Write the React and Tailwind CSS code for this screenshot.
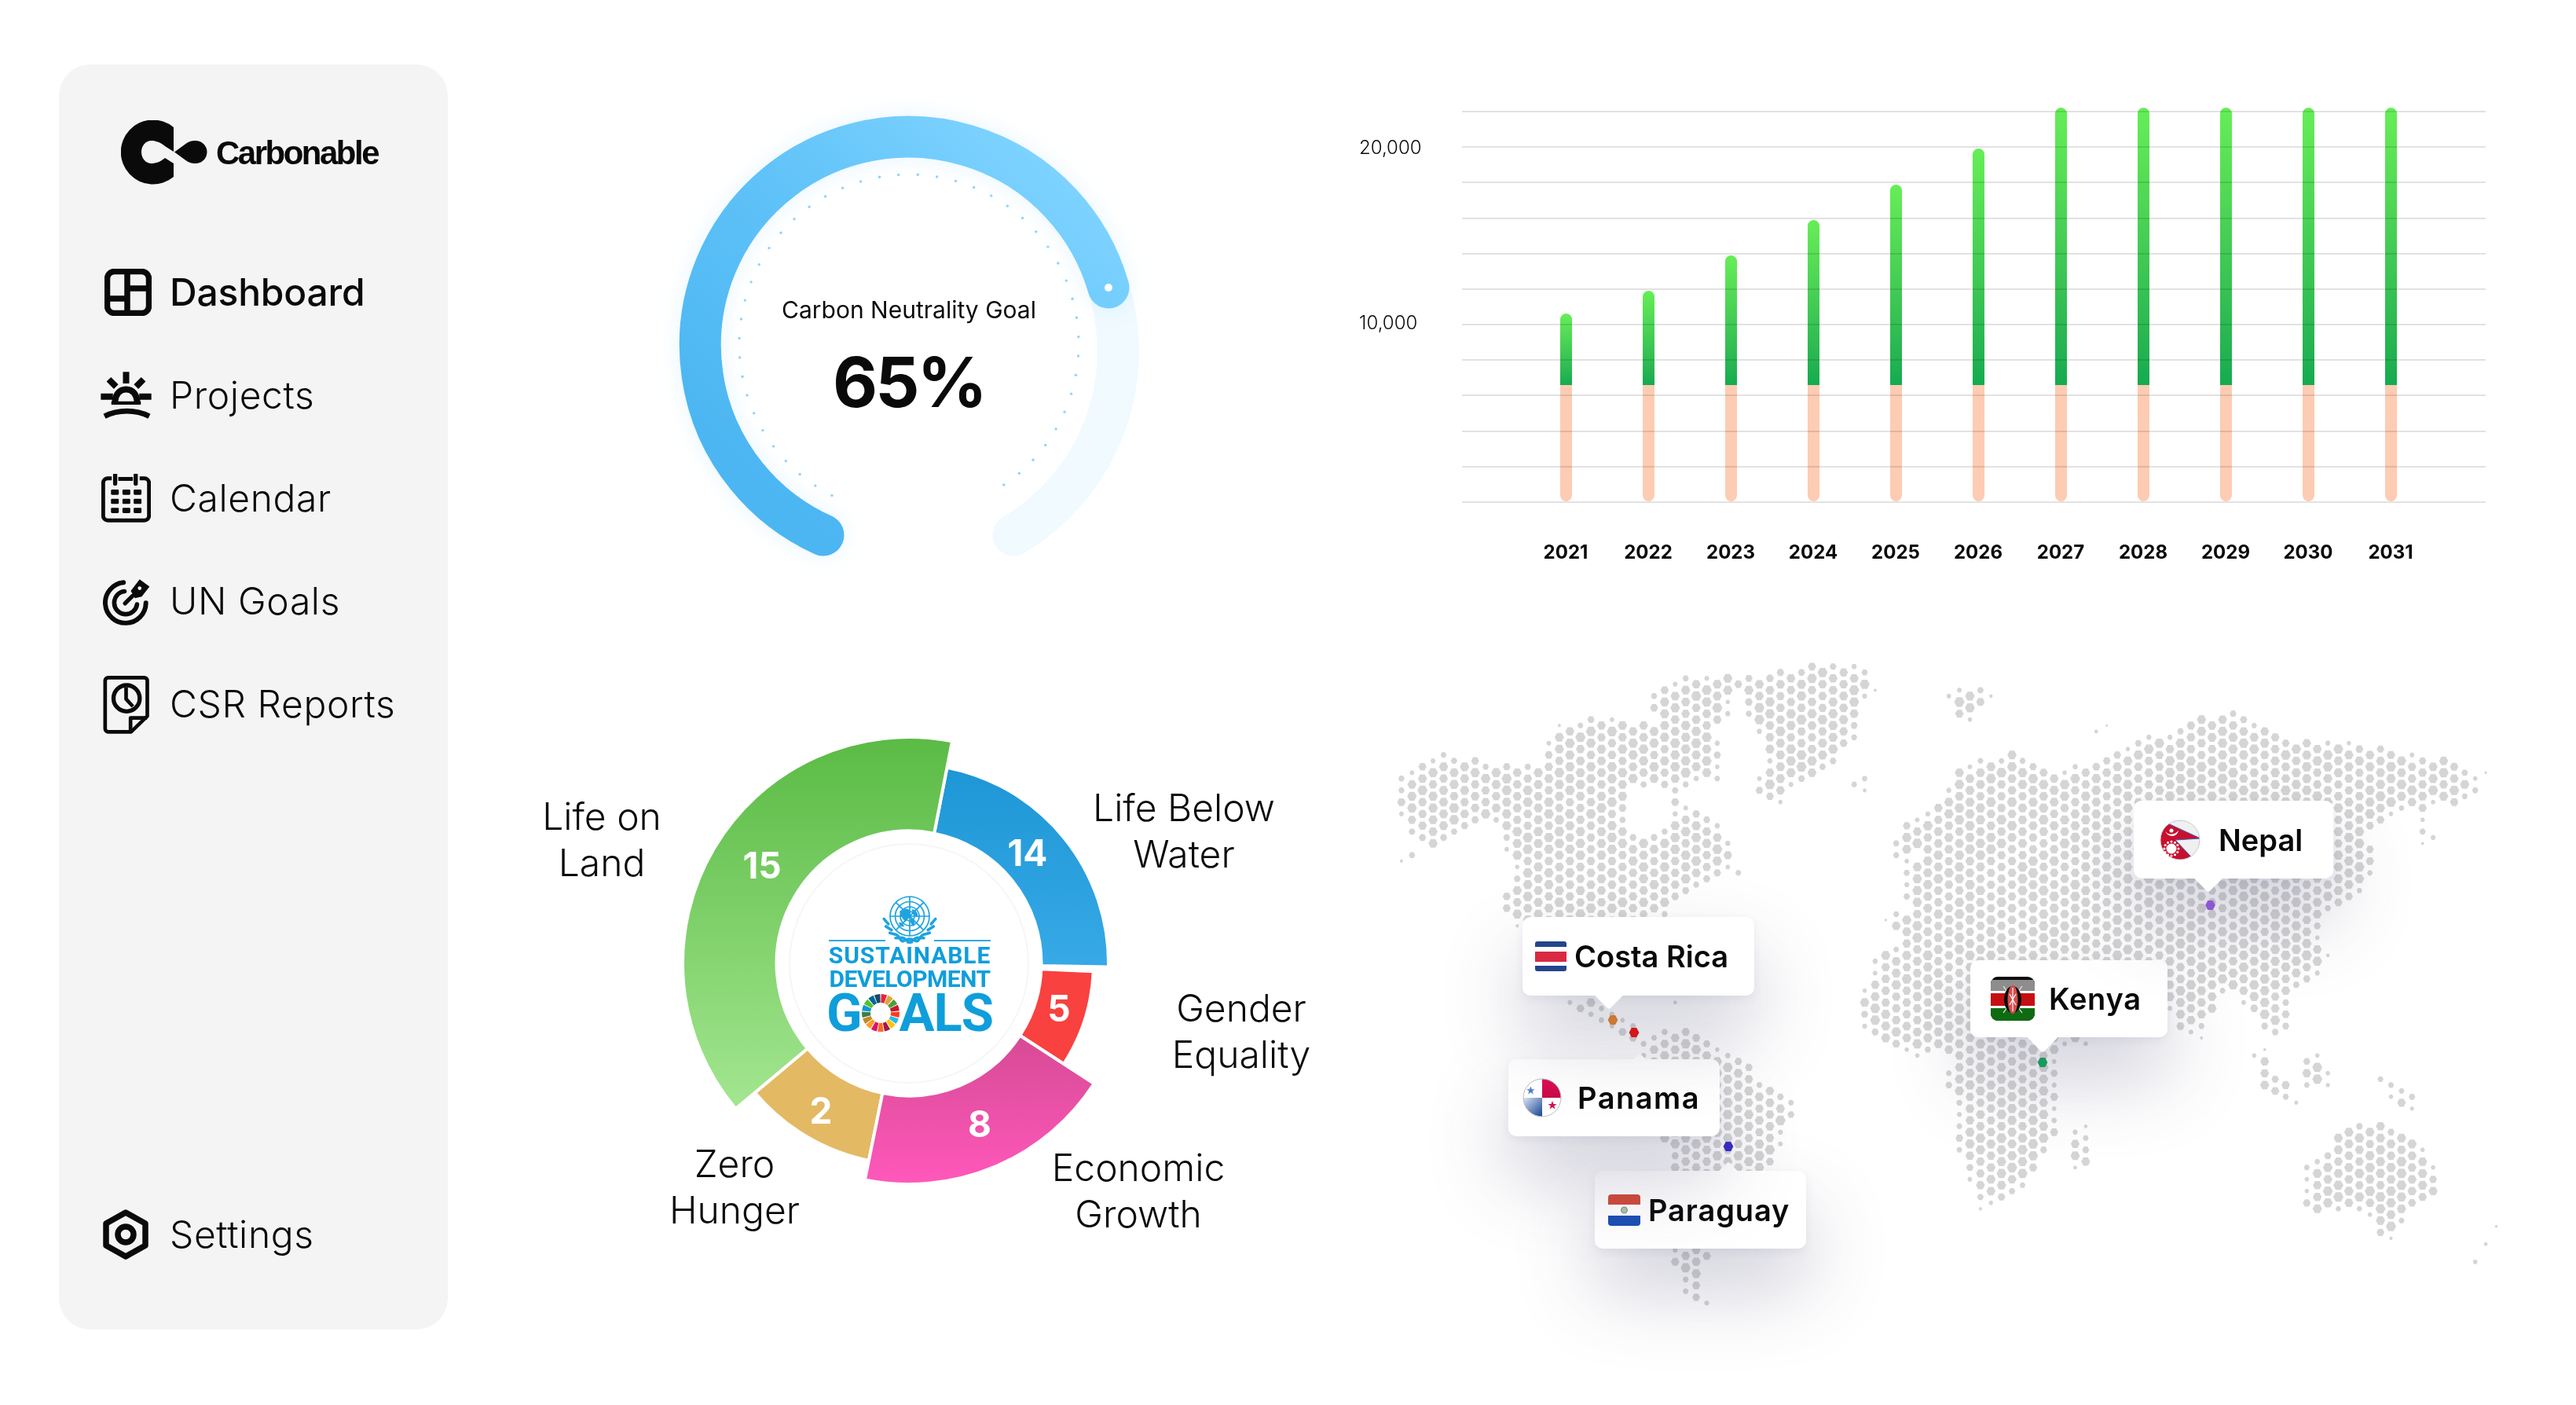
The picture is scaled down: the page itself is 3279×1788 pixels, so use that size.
import React from "react"

const navFont = { fontFamily: "Inter, sans-serif" }

const polar = (cx, cy, r, deg) => {
  const a = (deg * Math.PI) / 180
  return [cx + r * Math.sin(a), cy - r * Math.cos(a)]
}

const wedge = (cx, cy, r0, r1, a0, a1) => {
  const [x0, y0] = polar(cx, cy, r1, a0)
  const [x1, y1] = polar(cx, cy, r1, a1)
  const [x2, y2] = polar(cx, cy, r0, a1)
  const [x3, y3] = polar(cx, cy, r0, a0)
  const big = a1 - a0 > 180 ? 1 : 0
  return `M${x0} ${y0}A${r1} ${r1} 0 ${big} 1 ${x1} ${y1}L${x2} ${y2}A${r0} ${r0} 0 ${big} 0 ${x3} ${y3}Z`
}

/* ---------- sidebar icons, drawn in the pixel space of the crop ---------- */

const DashboardIcon = () => (
  <svg width="60" height="60" viewBox="0 0 60 60" fill="none" stroke="#0a0a0a" strokeWidth="7.500">
    <rect x="3.500" y="3.500" width="53" height="53" rx="9" />
    <path d="M29 4V56M4 38H29M29 25H56" />
  </svg>
)

const SunIcon = () => (
  <svg width="67" height="62" viewBox="50 30 200 185" fill="none" stroke="#0a0a0a" strokeWidth="24">
    <path d="M108 150C108 122 124 100 150 100S192 122 192 150" />
    <path d="M150 34V78M84 62L112 90M216 62L188 90M54 128H100M200 128H246" />
    <path d="M94 152H206" strokeWidth="12" />
    <path d="M68 202C120 176 186 176 238 202" strokeWidth="20" />
  </svg>
)

const CalendarIcon = () => (
  <svg width="63" height="62" viewBox="55 425 190 186" fill="none" stroke="#0a0a0a">
    <path d="M95 442H80A18 18 0 0 0 62 460V585A18 18 0 0 0 80 603H220A18 18 0 0 0 238 585V460A18 18 0 0 0 220 442H202" strokeWidth="15" />
    <path d="M120 444H176" strokeWidth="15" />
    <path d="M108 428V462M187 428V462" strokeWidth="16" strokeLinecap="round" />
    <g fill="#0a0a0a" stroke="none">
      <rect x="92" y="485" width="30" height="20" rx="4" />
      <rect x="136" y="485" width="30" height="20" rx="4" />
      <rect x="179" y="485" width="30" height="20" rx="4" />
      <rect x="92" y="520" width="30" height="20" rx="4" />
      <rect x="136" y="520" width="30" height="20" rx="4" />
      <rect x="179" y="520" width="30" height="20" rx="4" />
      <rect x="92" y="555" width="30" height="20" rx="4" />
      <rect x="136" y="555" width="30" height="20" rx="4" />
      <rect x="179" y="555" width="30" height="20" rx="4" />
    </g>
  </svg>
)

const TargetIcon = () => (
  <svg width="63" height="63" viewBox="60 825 190 190" fill="none" stroke="#0a0a0a" strokeLinecap="round">
    <path d="M142 850A78 78 0 1 0 228 928" strokeWidth="18" />
    <path d="M146 884A44 44 0 1 0 194 934" strokeWidth="17" />
    <path d="M148 930L176 902" strokeWidth="16" />
    <path d="M170 882L204 838L242 866L212 904L186 910Z" fill="#0a0a0a" stroke="none" />
    <circle cx="204" cy="872" r="7" fill="#f4f4f4" stroke="none" />
  </svg>
)

const ReportIcon = () => (
  <svg width="62" height="76" viewBox="55 1185 185 228" fill="none" stroke="#0a0a0a" strokeWidth="14" strokeLinejoin="round">
    <path d="M78 1198H215A12 12 0 0 1 227 1210V1345L165 1405H78A12 12 0 0 1 66 1393V1210A12 12 0 0 1 78 1198Z" />
    <path d="M163 1405V1352H226" />
    <circle cx="148" cy="1277" r="50" strokeWidth="16" />
    <path d="M146 1235V1280L172 1308" />
  </svg>
)

const SettingsIcon = () => (
  <svg width="60" height="64" viewBox="0 0 60 64" fill="none" stroke="#0a0a0a" strokeWidth="7.500" strokeLinejoin="round">
    <path d="M30 4L55 18V46L30 60L5 46V18Z" />
    <circle cx="30" cy="32" r="10" />
  </svg>
)

const LogoMark = () => (
  <svg width="110" height="82" viewBox="154 152 110 82">
    <path d="M221 161A41 41 0 1 0 221 224V207L210 200C204 205 198 207 193 207C185 207 180 200 180 192.500C180 185 185 178 193 178C198 178 204 180 210 185L221 192Z" fill="#0a0a0a" />
    <path d="M222 192.500L235 183C240 179 244 178 249 178A14.500 14.500 0 0 1 249 207C244 207 240 206 235 202Z" fill="#0a0a0a" />
  </svg>
)

const NavItem = ({ icon, label, active }) => (
  <div className="flex items-center h-[131px]">
    <div className="w-[91px] shrink-0 flex items-center">{icon}</div>
    <span className={active ? "text-[48px] font-medium text-[#0a0a0a] tracking-[-0.2px]" : "text-[48px] font-light text-[#0a0a0a] tracking-[0.6px]"}>
      {label}
    </span>
  </div>
)

const Sidebar = () => (
  <aside className="w-[495px] h-[1610px] my-[82px] bg-[#f4f4f4] rounded-[40px] flex flex-col pl-[50px] pb-[56px] shrink-0" style={navFont}>
    <div className="flex items-center pl-[29px] h-[224px] shrink-0 gap-[11px]">
      <LogoMark />
      <span className="text-[42px] font-bold tracking-[-2.5px] text-[#0a0a0a] font-['Liberation_Sans',sans-serif]">Carbonable</span>
    </div>
    <NavItem active label="Dashboard" icon={<div className="ml-[8px]"><DashboardIcon /></div>} />
    <NavItem label="Projects" icon={<div className="ml-[2px]"><SunIcon /></div>} />
    <NavItem label="Calendar" icon={<div className="ml-[4px]"><CalendarIcon /></div>} />
    <NavItem label="UN Goals" icon={<div className="ml-[5px]"><TargetIcon /></div>} />
    <NavItem label="CSR Reports" icon={<div className="ml-[5px]"><ReportIcon /></div>} />
    <div className="mt-auto">
      <NavItem label="Settings" icon={<div className="ml-[5px]"><SettingsIcon /></div>} />
    </div>
  </aside>
)

/* ---------- gauge ---------- */

const gaugeDots = []
for (let a = 207; a <= 510; a += 6.5) gaugeDots.push(polar(1157, 438, 216, a))

const Gauge = () => (
  <div className="pl-[267px] pt-[118px]">
    <div className="relative w-[640px] h-[640px]">
      <svg width="640" height="640" viewBox="837 118 640 640" fill="none">
        <defs>
          <linearGradient id="gaugeBlue" gradientUnits="userSpaceOnUse" x1="1000" y1="640" x2="1380" y2="220">
            <stop offset="0" stopColor="#4cb6f2" />
            <stop offset="0.5" stopColor="#5fc2f8" />
            <stop offset="1" stopColor="#80d4ff" />
          </linearGradient>
        </defs>
        <path d="M1411 366A272 272 0 0 1 1290 681" stroke="#f0faff" strokeWidth="53" strokeLinecap="round" />
        <g className="drop-shadow-[0_0_14px_rgba(77,182,242,0.14)]">
          <path d="M1048 681A265 265 0 1 1 1411 366" stroke="url(#gaugeBlue)" strokeWidth="53" strokeLinecap="round" />
        </g>
        <circle cx="1411" cy="366" r="5" fill="#fff" />
        {gaugeDots.map(([x, y], i) => (
          <circle key={i} cx={x} cy={y} r="1.700" fill="#8fd3f7" />
        ))}
      </svg>
      <div className="absolute inset-0 flex flex-col items-center" style={navFont}>
        <p className="mt-[256px] text-[30px] leading-[40px] text-[#0a0a0a]">Carbon Neutrality Goal</p>
        <p className="mt-[22px] text-[88px] leading-[100px] font-bold text-[#0a0a0a] tracking-[-3px]">65%</p>
      </div>
    </div>
  </div>
)

/* ---------- bar chart ---------- */

const bars = [
  { year: 2021, green: 91 },
  { year: 2022, green: 120 },
  { year: 2023, green: 165 },
  { year: 2024, green: 210 },
  { year: 2025, green: 255 },
  { year: 2026, green: 301 },
  { year: 2027, green: 353 },
  { year: 2028, green: 353 },
  { year: 2029, green: 353 },
  { year: 2030, green: 353 },
  { year: 2031, green: 353 },
]

const BarChart = () => (
  <div className="pt-[141px] pl-[30px] flex" style={navFont}>
    <div className="w-[131px] shrink-0 text-[24px] leading-[30px] font-light text-[#0a0a0a]">
      <p className="mt-[32px]">20,000</p>
      <p className="mt-[193px]">10,000</p>
    </div>
    <div className="w-[1303px]">
      <div className="relative h-[499px] flex flex-col justify-between">
        {Array.from({ length: 12 }).map((_, i) => (
          <div key={i} className="h-[2px] bg-[#e2e2e2]" />
        ))}
        <div className="absolute inset-0 flex items-end pl-[79.500px] pb-[2px]">
          {bars.map((b) => (
            <div key={b.year} className="w-[105px] flex flex-col items-center mix-blend-multiply">
              <div className="w-[15px] rounded-t-full bg-gradient-to-b from-[#66ee57] to-[#14ab50]" style={{ height: b.green }} />
              <div className="w-[15px] h-[148px] rounded-b-full bg-[#fdccb3]" />
            </div>
          ))}
        </div>
      </div>
      <div className="flex pl-[79.500px] mt-[48px]">
        {bars.map((b) => (
          <div key={b.year} className="w-[105px] text-center text-[24px] leading-[30px] font-bold text-[#0a0a0a]">{b.year}</div>
        ))}
      </div>
    </div>
  </div>
)

/* ---------- SDG donut ---------- */

const sdgColors = ["#e5243b", "#dda63a", "#4c9f38", "#c5192d", "#ff3a21", "#26bde2", "#fcc30b", "#a21942", "#fd6925", "#dd1367", "#fd9d24", "#bf8b2e", "#3f7e44", "#0a97d9", "#56c02b", "#00689d", "#19486a"]

const SdgWheel = () => (
  <svg width="50" height="50" viewBox="0 0 50 50">
    {sdgColors.map((c, i) => (
      <path key={i} d={wedge(25, 25, 13, 24, (i * 360) / 17 + 1.500, ((i + 1) * 360) / 17 - 1.500)} fill={c} />
    ))}
  </svg>
)

const UnEmblem = () => (
  <svg width="72" height="72" viewBox="-36 -36 72 72" fill="none" stroke="#1fa3e0">
    <g strokeWidth="1.700">
      <circle r="25" />
      <circle r="18.500" />
      <circle r="12" />
      <circle r="6" />
      <path d="M0 -25V25M-25 0H25M-17.700 -17.700L17.700 17.700M17.700 -17.700L-17.700 17.700" />
    </g>
    <path d="M-13 -6C-7 -12 2 -10 1 -3C-2 -3 -2 3 -5 7C-9 4 -12 -1 -13 -6ZM3 -9C8 -8 11 -4 10 1C6 1 3 -3 3 -9ZM1 3C5 3 8 8 5 13C2 11 0 7 1 3ZM-14 8C-11 7 -8 10 -7 13C-10 14 -13 12 -14 8Z" fill="#1fa3e0" stroke="none" />
    <g strokeWidth="3.600" strokeLinecap="round">
      {[...Array(7)].map((_, i) => {
        const a = 110 + i * 17
        const [x0, y0] = polar(0, 0, 29, a)
        const [x1, y1] = polar(0, 0, 33, a - 14)
        const [x2, y2] = polar(0, 0, 29, -a)
        const [x3, y3] = polar(0, 0, 33, -a + 14)
        return (
          <g key={i}>
            <path d={`M${x0} ${y0}L${x1} ${y1}`} />
            <path d={`M${x2} ${y2}L${x3} ${y3}`} />
          </g>
        )
      })}
    </g>
    <path d="M-4 33C-2 34 2 34 4 33" strokeWidth="2" />
  </svg>
)

const DonutNumber = ({ className, children }) => (
  <span className={`absolute -translate-x-1/2 -translate-y-1/2 text-[46px] leading-none font-bold text-white ${className}`}>{children}</span>
)

const DonutLabel = ({ className, children }) => (
  <p className={`absolute -translate-x-1/2 -translate-y-1/2 text-center text-[48px] leading-[59px] font-light text-[#0a0a0a] whitespace-pre ${className}`}>{children}</p>
)

const Donut = () => {
  const c = 320
  return (
    <div className="relative w-[1130px] h-[948px] pl-[267px] pt-[66px]" style={navFont}>
      <svg width="640" height="640" viewBox="0 0 640 640">
        <defs>
          <linearGradient id="dGreen" gradientUnits="userSpaceOnUse" x1="0" y1="35" x2="0" y2="505">
            <stop offset="0" stopColor="#5bbb45" />
            <stop offset="1" stopColor="#a3e690" />
          </linearGradient>
          <linearGradient id="dBlue" gradientUnits="userSpaceOnUse" x1="0" y1="70" x2="0" y2="320">
            <stop offset="0" stopColor="#1e96d5" />
            <stop offset="1" stopColor="#36a9e6" />
          </linearGradient>
          <linearGradient id="dPink" gradientUnits="userSpaceOnUse" x1="0" y1="420" x2="0" y2="600">
            <stop offset="0" stopColor="#d84b96" />
            <stop offset="1" stopColor="#ff58bb" />
          </linearGradient>
        </defs>
        <g stroke="#fff" strokeWidth="4">
          <path d={wedge(c, c, 168.500, 254, 11, 91)} fill="url(#dBlue)" />
          <path d={wedge(c, c, 168.500, 235, 92.500, 123)} fill="#f9413f" />
          <path d={wedge(c, c, 168.500, 256, 191.500, 230)} fill="#e3b964" />
          <path d={wedge(c, c, 168.500, 281, 123, 191.500)} fill="url(#dPink)" />
          <path d={wedge(c, c, 168.500, 288, 230, 371)} fill="url(#dGreen)" />
        </g>
        <circle cx={c} cy={c} r="152" fill="none" stroke="#f6f6f6" strokeWidth="2" />
      </svg>

      <DonutNumber className="left-[400px] top-[261px]">15</DonutNumber>
      <DonutNumber className="left-[738px] top-[245px]">14</DonutNumber>
      <DonutNumber className="left-[778px] top-[443px]">5</DonutNumber>
      <DonutNumber className="left-[677px] top-[590px]">8</DonutNumber>
      <DonutNumber className="left-[475px] top-[573px]">2</DonutNumber>

      <DonutLabel className="left-[196px] top-[228px]">{"Life on\nLand"}</DonutLabel>
      <DonutLabel className="left-[937px] top-[217px]">{"Life Below\nWater"}</DonutLabel>
      <DonutLabel className="left-[1010px] top-[472px]">{"Gender\nEquality"}</DonutLabel>
      <DonutLabel className="left-[879px] top-[675px]">{"Economic\nGrowth"}</DonutLabel>
      <DonutLabel className="left-[365px] top-[670px]">{"Zero\nHunger"}</DonutLabel>

      <div className="absolute left-[485px] top-[290px] w-[206px] flex flex-col items-center text-[#0f9edb] font-['Roboto',sans-serif] font-bold">
        <UnEmblem />
        <div className="w-full flex justify-between -mt-[6px]">
          <span className="w-[72px] h-[2px] bg-[#35a9e1]" />
          <span className="w-[72px] h-[2px] bg-[#35a9e1]" />
        </div>
        <p className="text-[30px] leading-[30px] mt-[3px] whitespace-nowrap tracking-[0.9px]">SUSTAINABLE</p>
        <p className="text-[30px] leading-[30px] whitespace-nowrap tracking-[-0.5px]">DEVELOPMENT</p>
        <div className="flex items-center text-[67px] leading-[56px] tracking-[-1px]">
          <span>G</span>
          <span className="-mx-[1px]"><SdgWheel /></span>
          <span>ALS</span>
        </div>
      </div>
    </div>
  )
}

/* ---------- world map ---------- */

const z5 = (pts) => pts.map(([x, y]) => [1760 + x / 1.96, 820 + y / 1.742])
const z6 = (pts) => pts.map(([x, y]) => [2360 + x / 1.823, 820 + y / 1.96])

const land = [
  // north america
  z5([[45,295],[100,245],[160,240],[290,262],[400,260],[410,215],[440,180],[520,160],[610,170],[660,170],[700,180],[800,190],[860,215],[850,295],[780,320],[740,345],[800,370],[850,400],[870,460],[900,515],[860,510],[800,530],[740,570],[690,610],[560,620],[330,640],[305,590],[315,480],[300,430],[270,400],[220,390],[170,440],[100,445],[45,400]]),
  z5([[670,100],[760,65],[885,65],[885,130],[860,180],[800,195],[700,185],[680,160]]),
  z5([[30,490],[80,460],[80,480],[40,500]]),
  // greenland
  z5([[870,80],[1040,50],[1210,45],[1240,95],[1180,140],[1185,210],[1130,265],[1040,300],[990,360],[935,345],[930,290],[970,240],[930,190],[900,130]]),
  z5([[1165,290],[1235,300],[1205,335],[1170,320]]),
  // central and south america
  z5([[440,785],[530,785],[610,820],[650,870],[620,880],[560,840],[480,805]]),
  z5([[695,785],[760,785],[760,800],[700,800]]),
  z5([[650,870],[760,845],[880,900],[950,960],[1035,1000],[1020,1060],[975,1150],[930,1220],[900,1290],[830,1340],[790,1400],[815,1465],[750,1445],[720,1350],[720,1150],[690,1090],[650,950]]),
  // eurasia and africa
  z6([[190,410],[260,290],[360,270],[440,310],[540,300],[630,250],[750,205],[850,170],[910,170],[1000,240],[1100,230],[1240,265],[1370,280],[1490,325],[1420,390],[1340,410],[1345,500],[1305,500],[1300,420],[1230,430],[1190,470],[1215,540],[1170,640],[1080,690],[1105,770],[1070,840],[1020,880],[1005,975],[950,960],[890,880],[860,855],[805,985],[770,985],[700,870],[640,850],[560,850],[540,1015],[490,1000],[465,1150],[470,1220],[400,1340],[350,1400],[290,1410],[260,1330],[235,1250],[240,1150],[215,1090],[230,1020],[130,1030],[60,1000],[15,940],[15,870],[40,800],[100,730],[60,700],[90,640],[120,620],[100,560],[90,500],[130,440]]),
  // islands
  z6([[215,110],[350,100],[310,150],[270,195],[230,170]]),
  z6([[530,260],[560,210],[615,180],[600,195],[550,240]]),
  z6([[1160,745],[1240,690],[1250,710],[1170,750]]),
  z6([[920,1000],[960,1000],[980,1080],[1060,1150],[1020,1150],[950,1100]]),
  z6([[1020,1075],[1070,1010],[1125,1070],[1090,1110],[1050,1110]]),
  z6([[1185,1050],[1240,1085],[1325,1130],[1290,1165],[1240,1125]]),
  z6([[1035,1320],[1090,1260],[1160,1200],[1220,1190],[1290,1210],[1345,1290],[1345,1390],[1280,1420],[1240,1495],[1200,1440],[1120,1410],[1050,1410]]),
  z6([[530,1190],[545,1190],[545,1290],[500,1320],[500,1230]]),
  z6([[1510,1430],[1490,1480],[1440,1545],[1425,1540],[1470,1470]]),
]

const holes = [
  z5([[620,310],[710,320],[720,400],[640,430],[610,390]]),
  z6([[70,640],[130,640],[130,660],[70,670]]),
  z6([[130,510],[160,520],[150,540],[120,540]]),
]

const inPoly = (poly, x, y) => {
  let hit = false
  for (let i = 0, j = poly.length - 1; i < poly.length; j = i++) {
    const [xi, yi] = poly[i]
    const [xj, yj] = poly[j]
    if (yi > y !== yj > y && x < ((xj - xi) * (y - yi)) / (yj - yi) + xi) hit = !hit
  }
  return hit
}

const isLand = (x, y) => land.some((p) => inPoly(p, x, y)) && !holes.some((p) => inPoly(p, x, y))

const hexPath = (x, y, s) => {
  const R = 6.400 * s
  const h = 5.900 * s
  return `M${(x - R).toFixed(1)} ${y.toFixed(1)}L${(x - R / 2).toFixed(1)} ${(y - h).toFixed(1)}L${(x + R / 2).toFixed(1)} ${(y - h).toFixed(1)}L${(x + R).toFixed(1)} ${y.toFixed(1)}L${(x + R / 2).toFixed(1)} ${(y + h).toFixed(1)}L${(x - R / 2).toFixed(1)} ${(y + h).toFixed(1)}Z`
}

const mapDots = () => {
  let d = ""
  const DX = 13.400
  const DY = 15
  for (let i = -60; i < 50; i++) {
    const x = 2547.700 + DX * i
    const off = Math.abs(i) % 2 === 1 ? DY / 2 : 0
    for (let j = -14; j < 45; j++) {
      const y = 1013.300 + DY * j + off
      if (!isLand(x, y)) continue
      const around = [[0, -DY], [0, DY], [DX, -DY / 2], [DX, DY / 2], [-DX, -DY / 2], [-DX, DY / 2]]
      const n = around.filter(([a, b]) => isLand(x + a, y + b)).length
      const rnd = Math.abs(Math.sin(i * 12.9898 + j * 78.233) * 43758.5453) % 1
      let s = 0.86 + rnd * 0.17
      if (n <= 4) s = 0.45 + rnd * 0.5
      if (n <= 2) s = 0.25 + rnd * 0.4
      d += hexPath(x, y, s)
    }
  }
  return d
}

const landPath = mapDots()

const CostaRicaFlag = () => (
  <svg width="40" height="38" viewBox="0 0 40 38" className="shrink-0">
    <clipPath id="crClip"><rect width="40" height="38" rx="3" /></clipPath>
    <g clipPath="url(#crClip)">
      <rect width="40" height="38" fill="#24458c" />
      <rect y="7" width="40" height="24" fill="#fff" />
      <rect y="13" width="40" height="13" fill="#d92a42" />
    </g>
  </svg>
)

const PanamaFlag = () => (
  <svg width="50" height="50" viewBox="0 0 50 50" className="shrink-0">
    <defs>
      <clipPath id="paClip"><circle cx="25" cy="25" r="24" /></clipPath>
      <linearGradient id="paBlue" x1="0" y1="0" x2="1" y2="1">
        <stop offset="0" stopColor="#dfe9f7" />
        <stop offset="1" stopColor="#123f8e" />
      </linearGradient>
      <linearGradient id="paRed" x1="0" y1="0" x2="0" y2="1">
        <stop offset="0" stopColor="#e20a57" />
        <stop offset="1" stopColor="#c70c47" />
      </linearGradient>
    </defs>
    <g clipPath="url(#paClip)">
      <rect width="50" height="50" fill="#fff" />
      <rect x="25" width="25" height="25" fill="url(#paRed)" />
      <rect y="25" width="25" height="25" fill="url(#paBlue)" />
    </g>
    <circle cx="25" cy="25" r="24" fill="none" stroke="#bdbdbd" />
    <path d="M11 12L12.500 16H16.500L13.200 18.500L14.500 22.500L11 20L7.500 22.500L8.800 18.500L5.500 16H9.500Z" transform="translate(0 -1) scale(.95)" fill="#4d82cc" />
    <path d="M39 29L40.500 33H44.500L41.200 35.500L42.500 39.500L39 37L35.500 39.500L36.800 35.500L33.500 33H37.500Z" transform="translate(-1 0)" fill="#d2104b" />
  </svg>
)

const ParaguayFlag = () => (
  <svg width="41" height="40" viewBox="0 0 41 40" className="shrink-0">
    <clipPath id="pyClip"><rect width="41" height="40" rx="4" /></clipPath>
    <g clipPath="url(#pyClip)">
      <rect width="41" height="40" fill="#fff" />
      <rect width="41" height="13" fill="#d24a3b" />
      <rect y="27" width="41" height="13" fill="#1c4fb4" />
    </g>
    <circle cx="20.500" cy="20" r="4" fill="#a9c8a8" stroke="#7b8f7a" />
  </svg>
)

const NepalFlag = () => (
  <svg width="52" height="52" viewBox="0 0 52 52" className="shrink-0">
    <defs>
      <clipPath id="npClip"><circle cx="26" cy="26" r="25" /></clipPath>
    </defs>
    <g clipPath="url(#npClip)">
      <rect width="52" height="52" fill="#f0f0f0" />
      <path d="M0 0L52 24L20 26L52 60H0Z" fill="#c8102e" stroke="#3a62b8" strokeWidth="1" />
    </g>
    <circle cx="26" cy="26" r="25" fill="none" stroke="#c9c9c9" />
    <path d="M7 15C11 20 19 20 24 14C22 23 11 23 7 15Z" fill="#fff" />
    <circle cx="15" cy="14" r="2.500" fill="#fff" />
    <g fill="#fff">
      <circle cx="15" cy="37" r="6.500" />
      {[...Array(12)].map((_, i) => {
        const [x, y] = polar(15, 37, 9, i * 30)
        return <circle key={i} cx={x} cy={y} r="1.500" />
      })}
    </g>
  </svg>
)

const KenyaFlag = () => (
  <svg width="56" height="56" viewBox="0 0 56 56" className="shrink-0">
    <clipPath id="keClip"><rect width="56" height="56" rx="9" /></clipPath>
    <g clipPath="url(#keClip)">
      <rect width="56" height="56" fill="#0b0b0b" />
      <rect y="4" width="56" height="14" fill="#8d8d8d" />
      <rect y="18" width="56" height="3" fill="#fff" />
      <rect y="21" width="56" height="16" fill="#c60f12" />
      <rect y="37" width="56" height="3" fill="#fff" />
      <rect y="40" width="56" height="16" fill="#0f6b12" />
    </g>
    <path d="M16 12L40 46M40 12L16 46" stroke="#efefef" strokeWidth="1.200" />
    <ellipse cx="28" cy="29" rx="11" ry="17" fill="#0b0b0b" />
    <ellipse cx="28" cy="29" rx="6.500" ry="18" fill="#d94b4b" />
    <path d="M28 14V44M24 22L32 36M32 22L24 36" stroke="#fff" strokeWidth="1.200" />
  </svg>
)

const tipShadow = "shadow-[0_4px_12px_rgba(70,70,110,0.08),0_50px_100px_rgba(70,70,110,0.27)]"

const Tooltip = ({ className, arrowClass, textClass, flag, name }) => (
  <div className={`absolute bg-white rounded-[10px] flex items-center ${tipShadow} ${className}`}>
    <span className={`absolute w-[28px] h-[28px] rotate-45 bg-white rounded-[3px] ${arrowClass}`} />
    <span className="relative flex items-center w-full h-full">
      {flag}
      <span className={`text-[38px] leading-none font-semibold text-[#0a0a0a] whitespace-nowrap font-['Inter',sans-serif] ${textClass}`}>{name}</span>
    </span>
  </div>
)

const WorldMap = () => (
  <div className="relative w-[1579px] h-[948px]">
    <svg width="1579" height="948" viewBox="1700 840 1579 948">
      <path d={landPath} fill="#d5d5d5" />
      <path d={hexPath(2053, 1298, 1)} fill="#e8832a" />
      <path d={hexPath(2080, 1314, 1)} fill="#ee1111" />
      <path d={hexPath(2200, 1459, 1)} fill="#3a2bc9" />
      <path d={hexPath(2813.500, 1152, 1)} fill="#9b5de5" />
      <path d={hexPath(2600, 1352, 1)} fill="#14a85a" />
    </svg>
    <Tooltip className="left-[330px] top-[650px] w-[269px] h-[99px] pl-[17px]" arrowClass="left-[156px] -top-[6px]" textClass="ml-[10px] tracking-[0.9px]" flag={<ParaguayFlag />} name="Paraguay" />
    <Tooltip className="left-[220px] top-[508px] w-[269px] h-[98px] pl-[18px]" arrowClass="left-[153px] -top-[2px]" textClass="ml-[20px] tracking-[1.5px]" flag={<PanamaFlag />} name="Panama" />
    <Tooltip className="left-[238px] top-[327px] w-[295px] h-[100px] pl-[16px]" arrowClass="left-[96px] top-[84px]" textClass="ml-[10px]" flag={<CostaRicaFlag />} name="Costa Rica" />
    <Tooltip className="left-[808px] top-[382px] w-[251px] h-[98px] pl-[26px]" arrowClass="left-[78px] top-[84px]" textClass="ml-[18px] tracking-[0.7px]" flag={<KenyaFlag />} name="Kenya" />
    <Tooltip className="left-[1016px] top-[179px] w-[254px] h-[99px] pl-[33px]" arrowClass="left-[81px] top-[83px]" textClass="ml-[23px]" flag={<NepalFlag />} name="Nepal" />
  </div>
)

const App = () => (
  <div className="w-[3279px] h-[1788px] bg-white flex pl-[75px] overflow-hidden">
    <Sidebar />
    <main className="grid grid-cols-[1130px_1579px] grid-rows-[840px_948px]">
      <Gauge />
      <BarChart />
      <Donut />
      <WorldMap />
    </main>
  </div>
)

export default App
